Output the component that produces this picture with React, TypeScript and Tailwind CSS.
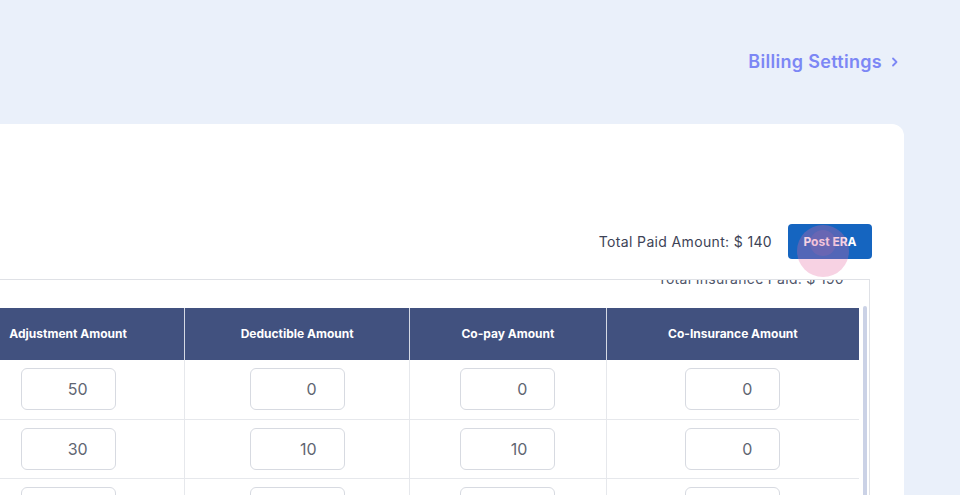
import React from 'react';

const font = { fontFamily: 'Inter, "Open Sans", "Liberation Sans", sans-serif' };

const columns = [
  { label: 'Adjustment Amount', width: 'w-[233px]' },
  { label: 'Deductible Amount', width: 'w-[225px]' },
  { label: 'Co-pay Amount', width: 'w-[197px]' },
  { label: 'Co-Insurance Amount', width: 'w-[253px]' },
];

const rows = [
  ['50', '0', '0', '0'],
  ['30', '10', '10', '0'],
  ['', '', '', ''],
];

function AmountInput({ value }: { value: string }) {
  return (
    <input
      readOnly
      value={value}
      className="w-[95px] h-[42px] rounded-md border border-[#d7dae1] bg-white pr-[27px] text-right text-base text-[#5f6672] outline-none"
      style={font}
    />
  );
}

export default function App() {
  return (
    <div className="w-[960px] h-[495px] overflow-hidden bg-[#eaf0fa]" style={font}>
      {/* ページ上部 */}
      <div className="h-[124px] flex items-center justify-end pr-[60px]">
        <a className="flex items-center gap-2 text-lg font-semibold tracking-[0.3px] text-[#7c87f5] cursor-pointer">
          Billing Settings
          <svg width="10" height="10" viewBox="0 0 10 10" fill="none">
            <path d="M3 1.5 6.5 5 3 8.5" stroke="currentColor" strokeWidth="1.8" strokeLinecap="round" strokeLinejoin="round" />
          </svg>
        </a>
      </div>

      {/* カード */}
      <div className="ml-[-100px] w-[1004px] h-[400px] bg-white rounded-tr-xl">
        <div className="pt-[100px] pr-[32px] flex items-center justify-end gap-4">
          <span className="text-sm tracking-[0.35px] text-[#3d4356]">Total Paid Amount: $ 140</span>
          <button className="relative w-[84px] h-[35px] rounded bg-[#1565c0] text-xs font-bold text-white">
            Post ERA
            <span className="absolute left-[9px] top-[1px] w-[52px] h-[52px] rounded-full bg-[#e66aa3]/30" />
            <span className="absolute left-[22px] top-[6px] w-[26px] h-[26px] rounded-full bg-[#e66aa3]/15" />
          </button>
        </div>

        <div className="mt-[20px] pr-[34px]">
          <div className="border-t border-r border-[#dfe1e6] flex flex-col">
            <div className="h-[28px] overflow-hidden flex justify-end pr-[25px]">
              <span className="-mt-[8px] text-sm leading-[14px] tracking-[0.3px] text-[#50566a]">Total Insurance Paid: $ 190</span>
            </div>
            <div className="flex">
              <table className="ml-[52px] border-collapse">
                <thead>
                  <tr className="bg-[#41517f]">
                    {columns.map((c, i) => (
                      <th
                        key={c.label}
                        className={`${c.width} h-[52px] text-xs font-bold text-white text-center ${i > 0 ? 'border-l border-[#d5d9e4]' : ''}`}
                      >
                        {c.label}
                      </th>
                    ))}
                  </tr>
                </thead>
                <tbody>
                  {rows.map((r, ri) => (
                    <tr key={ri} className="h-[59px] border-b border-[#e6e8ec]">
                      {r.map((v, ci) => (
                        <td key={ci} className={`text-center align-middle ${ci > 0 ? 'border-l border-[#e6e8ec]' : ''}`}>
                          <div className="flex justify-center">
                            <AmountInput value={v} />
                          </div>
                        </td>
                      ))}
                    </tr>
                  ))}
                </tbody>
              </table>
              <div className="ml-[4px] mr-[2px] w-[4px] rounded-full bg-[#cbd2e6] -mt-[2px]" />
            </div>
          </div>
        </div>
      </div>
    </div>
  );
}
